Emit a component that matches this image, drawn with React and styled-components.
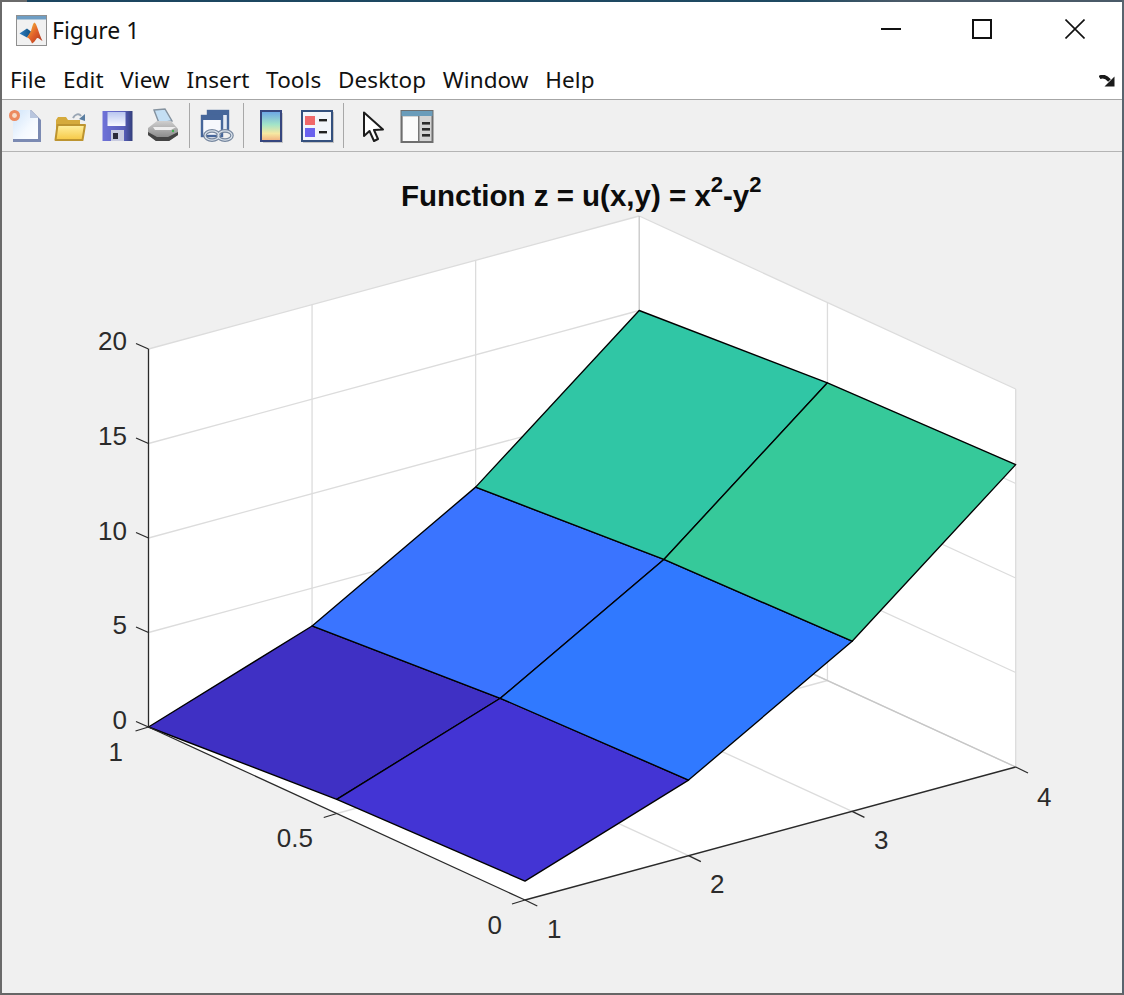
import React from "react";
import styled, { createGlobalStyle } from "styled-components";

const GlobalStyle = createGlobalStyle`
  html, body {
    margin: 0;
    padding: 0;
    background: #f0f0f0;
  }
`;

const Window = styled.div`
  width: 1124px;
  height: 995px;
  box-sizing: border-box;
  display: flex;
  flex-flow: column;
  border-left: 2px solid #6a6a6a;
  border-right: 2px solid #59646e;
  border-bottom: 2px solid #666;
  background: #f0f0f0;
  font-family: "Noto Sans", "Open Sans", sans-serif;
  overflow: hidden;
`;

const TopEdge = styled.div`
  height: 2px;
  flex-shrink: 0;
  margin: 0 -2px;
  background: linear-gradient(90deg, #6a6a6a 27px, #1b4560 27px, #1f4a62 800px, #4a5a68 900px);
`;

const TitleBar = styled.div`
  height: 60px;
  flex-shrink: 0;
  display: flex;
  align-items: center;
  padding-left: 14px;
  background: #fff;
`;

const AppIcon = styled.svg`
  width: 32px;
  height: 32px;
  margin-top: -2px;
  flex-shrink: 0;
`;

const TitleText = styled.span`
  margin-left: 4px;
  margin-top: -4px;
  font-size: 23px;
  color: #111;
`;

const Controls = styled.div`
  margin-left: auto;
  display: flex;
  align-self: stretch;
`;

const ControlButton = styled.div`
  width: ${({ $w }) => $w}px;
  display: flex;
  align-items: center;
  justify-content: center;
  margin-top: -6px;
`;

const MenuBar = styled.div`
  height: 37px;
  flex-shrink: 0;
  display: flex;
  align-items: center;
  gap: 16.6px;
  padding: 0 7px 0 8px;
  background: #fff;
  border-bottom: 1px solid #a6a6a6;
`;

const MenuItem = styled.span`
  margin-top: -2px;
  font-size: 22.5px;
  letter-spacing: 0.1px;
  color: #111;
`;

const DockArrow = styled.svg`
  width: 16px;
  height: 12px;
  margin-left: auto;
`;

const Toolbar = styled.div`
  height: 51px;
  flex-shrink: 0;
  display: flex;
  align-items: center;
  background: #f0f0f0;
  border-bottom: 1px solid #b4b4b4;
`;

const ToolButton = styled.div`
  width: ${({ $w }) => $w || 46}px;
  height: 36px;
  display: flex;
  align-items: center;
  justify-content: center;
  flex-shrink: 0;
  svg {
    width: 36px;
    height: 36px;
    display: block;
    filter: blur(0.5px);
  }
`;

const ToolSeparator = styled.div`
  width: 1px;
  height: 45px;
  margin: 0 ${({ $r }) => $r || 4}px 0 ${({ $l }) => $l || 3}px;
  background: #a8a8a8;
  flex-shrink: 0;
`;

const Canvas = styled.div`
  flex: 1;
  min-height: 0;
`;

const PlotSvg = styled.svg`
  display: block;
  width: 100%;
  height: 100%;
`;

const Wall = styled.polygon`
  fill: #fff;
`;

const GridLine = styled.line`
  stroke: ${({ $strong }) => ($strong ? "#c6c6c6" : "#dcdcdc")};
  stroke-width: 1.3;
`;

const AxisLine = styled.line`
  stroke: #2a2a2a;
  stroke-width: 1.3;
`;

const Patch = styled.polygon`
  stroke: #000;
  stroke-width: 1.35;
  stroke-linejoin: round;
`;

const TickLabel = styled.text`
  font-family: "Liberation Sans", Arial, sans-serif;
  font-size: 26px;
  fill: #2b2b2b;
`;

const PlotTitle = styled.text`
  font-family: "Liberation Sans", Arial, sans-serif;
  font-size: 29.5px;
  font-weight: 700;
  fill: #0c0c0c;
`;

const menus = ["File", "Edit", "View", "Insert", "Tools", "Desktop", "Window", "Help"];

// axes corners in page pixels, plot is an orthographic projection
const A = { x: 148.5, y: 727 };
const F = { x: 525, y: 900 };
const C = { x: 1015.7, y: 767 };
const Z_UNIT = 18.9;

const project = (x, y, z = 0) => ({
  x: A.x + (1 - y) * (F.x - A.x) + ((x - 1) / 3) * (C.x - F.x),
  y: A.y + (1 - y) * (F.y - A.y) + ((x - 1) / 3) * (C.y - F.y) - z * Z_UNIT,
});

const pts = (list) => list.map((p) => `${p.x},${p.y}`).join(" ");

const Segment = ({ as: Comp, from, to, ...rest }) => (
  <Comp x1={from.x} y1={from.y} x2={to.x} y2={to.y} {...rest} />
);

const patchColors = [
  ["#3f30c4", "#4334d4"],
  ["#3a74ff", "#3079ff"],
  ["#30c6a5", "#36c99a"],
];

const zTicks = [0, 5, 10, 15, 20];

const tickLabels = [
  { text: "20", x: 127, y: 350, anchor: "end" },
  { text: "15", x: 127, y: 445, anchor: "end" },
  { text: "10", x: 127, y: 540, anchor: "end" },
  { text: "5", x: 127, y: 634, anchor: "end" },
  { text: "0", x: 127, y: 729, anchor: "end" },
  { text: "1", x: 123, y: 761, anchor: "end" },
  { text: "0.5", x: 313, y: 847, anchor: "end" },
  { text: "0", x: 502, y: 934, anchor: "end" },
  { text: "1", x: 547, y: 938 },
  { text: "2", x: 710, y: 893 },
  { text: "3", x: 874, y: 849 },
  { text: "4", x: 1037, y: 806 },
];

const Surface = () => {
  const patches = [];
  for (let i = 0; i < 3; i++) {
    for (let j = 0; j < 2; j++) {
      const x0 = i + 1;
      const x1 = i + 2;
      const y0 = 1 - j * 0.5;
      const y1 = y0 - 0.5;
      const corner = (x, y) => project(x, y, x * x - y * y);
      patches.push(
        <Patch
          key={`${i}-${j}`}
          fill={patchColors[i][j]}
          points={pts([corner(x0, y0), corner(x1, y0), corner(x1, y1), corner(x0, y1)])}
        />
      );
    }
  }
  return <g>{patches}</g>;
};

const Plot = () => (
  <PlotSvg viewBox="2 152 1120 841">
    <PlotTitle x="401" y="206">
      Function z = u(x,y) = x
      <tspan fontSize="22" dy="-14">2</tspan>
      <tspan dy="14">-y</tspan>
      <tspan fontSize="22" dy="-14">2</tspan>
    </PlotTitle>

    <Wall points={pts([project(1, 1), project(4, 1), project(4, 1, 20), project(1, 1, 20)])} />
    <Wall points={pts([project(4, 1), project(4, 0), project(4, 0, 20), project(4, 1, 20)])} />
    <Wall points={pts([project(1, 1), project(1, 0), project(4, 0), project(4, 1)])} />

    {zTicks.map((z) => (
      <g key={z}>
        <Segment as={GridLine} from={project(1, 1, z)} to={project(4, 1, z)} />
        <Segment as={GridLine} from={project(4, 1, z)} to={project(4, 0, z)} />
      </g>
    ))}
    {[2, 3].map((x) => (
      <g key={x}>
        <Segment as={GridLine} from={project(x, 1)} to={project(x, 1, 20)} />
        <Segment as={GridLine} from={project(x, 0)} to={project(x, 1)} />
      </g>
    ))}
    <Segment as={GridLine} from={project(4, 0.5)} to={project(4, 0.5, 20)} />
    <Segment as={GridLine} from={project(1, 0.5)} to={project(4, 0.5)} />
    <Segment as={GridLine} from={project(4, 0, 0)} to={project(4, 0, 20)} />
    <Segment as={GridLine} $strong from={project(4, 1)} to={project(4, 1, 20)} />
    <Segment as={GridLine} $strong from={project(4, 1)} to={project(4, 0)} />
    <Segment as={GridLine} from={project(1, 1)} to={project(4, 1)} />

    <Surface />

    <Segment as={AxisLine} from={project(1, 1)} to={project(1, 1, 20)} />
    <Segment as={AxisLine} from={project(1, 1)} to={project(1, 0)} />
    <Segment as={AxisLine} from={project(1, 0)} to={project(4, 0)} />
    {zTicks.map((z) => {
      const p = project(1, 1, z);
      return <AxisLine key={z} x1={p.x} y1={p.y} x2={p.x - 12.5} y2={p.y - 5.5} />;
    })}
    {[1, 0.5, 0].map((y) => {
      const p = project(1, y);
      return <AxisLine key={y} x1={p.x} y1={p.y} x2={p.x - 13} y2={p.y + 4} />;
    })}
    {[1, 2, 3, 4].map((x) => {
      const p = project(x, 0);
      return <AxisLine key={x} x1={p.x} y1={p.y} x2={p.x + 12.3} y2={p.y + 6} />;
    })}

    {tickLabels.map((t, i) => (
      <TickLabel key={i} x={t.x} y={t.y} textAnchor={t.anchor || "start"}>
        {t.text}
      </TickLabel>
    ))}
  </PlotSvg>
);

const MatlabIcon = () => (
  <AppIcon viewBox="0 0 32 32">
    <defs>
      <linearGradient id="peak" x1="0" y1="0" x2="1" y2="1">
        <stop offset="0" stopColor="#f7c53b" />
        <stop offset="0.5" stopColor="#e2622a" />
        <stop offset="1" stopColor="#a8301d" />
      </linearGradient>
      <linearGradient id="wing" x1="0" y1="0" x2="1" y2="0">
        <stop offset="0" stopColor="#2f7fc4" />
        <stop offset="1" stopColor="#12507e" />
      </linearGradient>
    </defs>
    <rect x="0.5" y="0.5" width="30" height="30" fill="#f1f1f1" stroke="#8f8f8f" />
    <rect x="1" y="1" width="29" height="3.5" fill="#6f9ec4" />
    <path d="M3.5 18.5 L11 13.5 L15.5 17 L11 22.5 Z" fill="url(#wing)" />
    <path d="M11 22.5 L15 16 C16 13 17 8 18.5 7.5 C20.5 8 23 19 26.5 26 C24 24.5 22.5 22.5 21 23 C19 26 17.5 28 16 28.5 C15 26 13.5 23 11 22.5 Z" fill="url(#peak)" />
  </AppIcon>
);

const NewFileIcon = () => (
  <svg viewBox="0 0 36 36">
    <defs>
      <linearGradient id="page" x1="0" y1="0" x2="1" y2="1">
        <stop offset="0" stopColor="#cfe4fa" />
        <stop offset="0.6" stopColor="#f4f9ff" />
        <stop offset="1" stopColor="#fff" />
      </linearGradient>
    </defs>
    <path d="M6 2 H24 L34 12 V34 H6 Z" fill="#7b8ab2" />
    <path d="M6 2 H23 L31 10 V31 H6 Z" fill="url(#page)" />
    <path d="M23 2 L31 10 H23 Z" fill="#b9c6de" />
    <circle cx="7.5" cy="7.5" r="5.5" fill="#ec8a60" />
    <circle cx="7.5" cy="7.5" r="2.4" fill="#f8dcc8" />
  </svg>
);

const OpenIcon = () => (
  <svg viewBox="0 0 36 36">
    <defs>
      <linearGradient id="folder" x1="0" y1="0" x2="0" y2="1">
        <stop offset="0" stopColor="#fff0a0" />
        <stop offset="1" stopColor="#f6c844" />
      </linearGradient>
    </defs>
    <path d="M3 12 L5 9 H13 L15 12 H27 V32 H3 Z" fill="#d5aa3c" />
    <path d="M2.5 32 L4.5 17 H32 L29.5 32 Z" fill="url(#folder)" stroke="#bd9430" strokeWidth="2" strokeLinejoin="round" />
    <path d="M20 10 C22 6 26 5 28 8" fill="none" stroke="#9aa6b4" strokeWidth="2" />
    <path d="M26 11 L32 6 L32 13 Z" fill="#5a7da0" />
  </svg>
);

const SaveIcon = () => (
  <svg viewBox="0 0 36 36">
    <defs>
      <linearGradient id="disk" x1="0" y1="0" x2="1" y2="0">
        <stop offset="0" stopColor="#6f72d8" />
        <stop offset="0.7" stopColor="#5a60bc" />
        <stop offset="1" stopColor="#333f7c" />
      </linearGradient>
      <linearGradient id="label" x1="0" y1="0" x2="0" y2="1">
        <stop offset="0" stopColor="#b9c6f0" />
        <stop offset="1" stopColor="#f8faff" />
      </linearGradient>
    </defs>
    <rect x="3.5" y="3" width="30" height="30" fill="url(#disk)" />
    <rect x="8.5" y="4" width="18" height="14" fill="url(#label)" />
    <rect x="12" y="22" width="13" height="11" fill="#c9cce0" />
    <rect x="14" y="25" width="5" height="6" fill="#2c2c3a" />
  </svg>
);

const PrintIcon = () => (
  <svg viewBox="0 0 36 36">
    <defs>
      <linearGradient id="printer" x1="0" y1="0" x2="0" y2="1">
        <stop offset="0" stopColor="#cfcfcf" />
        <stop offset="1" stopColor="#7c7c7c" />
      </linearGradient>
    </defs>
    <path d="M9 2 L20 1 L27 13 L14 15 Z" fill="#c4dff4" stroke="#84929f" strokeWidth="1.4" />
    <path d="M3 20 L12 13 H26 L33 21 V27 L24 33 H11 L3 27 Z" fill="url(#printer)" />
    <path d="M3 24 L12 29 H23 L33 24 V27 L24 33 H11 L3 27 Z" fill="#444" />
    <path d="M10 22 H26 L31 19 H8 Z" fill="#eee" />
    <circle cx="28" cy="23" r="1.2" fill="#3fb04f" />
  </svg>
);

const LinkIcon = () => (
  <svg viewBox="0 0 36 36">
    <rect x="9" y="3" width="20" height="20" fill="#e4eaf4" stroke="#46669a" strokeWidth="2.4" />
    <rect x="9" y="3" width="20" height="4" fill="#46669a" />
    <rect x="3" y="8" width="20" height="20" fill="#f6f8fc" stroke="#46669a" strokeWidth="2.4" />
    <rect x="3" y="8" width="20" height="4" fill="#46669a" />
    <ellipse cx="13" cy="27.5" rx="7" ry="4.6" fill="none" stroke="#75869e" strokeWidth="3.6" />
    <ellipse cx="26" cy="27.5" rx="7" ry="4.6" fill="none" stroke="#75869e" strokeWidth="3.6" />
    <ellipse cx="13" cy="27.5" rx="7" ry="4.6" fill="none" stroke="#dbe3ec" strokeWidth="1.3" />
    <ellipse cx="26" cy="27.5" rx="7" ry="4.6" fill="none" stroke="#dbe3ec" strokeWidth="1.3" />
  </svg>
);

const ColorbarIcon = () => (
  <svg viewBox="0 0 36 36">
    <defs>
      <linearGradient id="bar" x1="0" y1="0" x2="0" y2="1">
        <stop offset="0" stopColor="#6aa4e8" />
        <stop offset="0.45" stopColor="#a2e4c8" />
        <stop offset="0.75" stopColor="#f6e8a2" />
        <stop offset="1" stopColor="#f2ae7e" />
      </linearGradient>
    </defs>
    <rect x="10" y="5" width="20" height="30" fill="#c6c6c6" />
    <rect x="8" y="3" width="20" height="30" fill="url(#bar)" stroke="#36467e" strokeWidth="2" />
  </svg>
);

const LegendIcon = () => (
  <svg viewBox="0 0 36 36">
    <rect x="4" y="4" width="31" height="31" fill="#c2c2c2" />
    <rect x="3" y="3" width="30" height="30" fill="#f2f5fa" stroke="#34507e" strokeWidth="2" />
    <rect x="6" y="8" width="10" height="9" fill="#f0686a" />
    <rect x="6" y="20" width="10" height="9" fill="#6a62ee" />
    <rect x="20" y="11" width="8" height="2.4" fill="#222" />
    <rect x="20" y="23" width="8" height="2.4" fill="#222" />
  </svg>
);

const CursorIcon = () => (
  <svg viewBox="0 0 36 36">
    <path d="M11 4.5 L11 28 L16.5 23 L21 33 L25 31 L21 22 L30 21.5 Z" fill="#fff" stroke="#1c1c1c" strokeWidth="2" strokeLinejoin="round" />
  </svg>
);

const PanelIcon = () => (
  <svg viewBox="0 0 36 36">
    <rect x="2.5" y="3" width="31" height="31" fill="#d4d4d4" stroke="#6e6e6e" strokeWidth="2" />
    <rect x="2.5" y="3" width="31" height="5" fill="#6a9cba" />
    <rect x="4" y="9" width="15" height="24" fill="#fbfbfb" />
    <rect x="19" y="8" width="1.5" height="25" fill="#777" />
    <rect x="23" y="14" width="8" height="2.6" fill="#2c2c2c" />
    <rect x="23" y="20" width="8" height="2.6" fill="#2c2c2c" />
    <rect x="23" y="26" width="8" height="2.6" fill="#2c2c2c" />
  </svg>
);

const App = () => (
  <>
    <GlobalStyle />
    <Window>
      <TopEdge />
      <TitleBar>
        <MatlabIcon />
        <TitleText>Figure 1</TitleText>
        <Controls>
          <ControlButton $w={90}>
            <svg width="20" height="2"><rect width="20" height="2" fill="#111" /></svg>
          </ControlButton>
          <ControlButton $w={92}>
            <svg width="20" height="20"><rect x="1" y="1" width="18" height="18" fill="none" stroke="#111" strokeWidth="2" /></svg>
          </ControlButton>
          <ControlButton $w={94}>
            <svg width="20" height="20"><path d="M0.5 0.5 L19.5 19.5 M19.5 0.5 L0.5 19.5" stroke="#111" strokeWidth="1.6" /></svg>
          </ControlButton>
        </Controls>
      </TitleBar>
      <MenuBar>
        {menus.map((m) => (
          <MenuItem key={m}>{m}</MenuItem>
        ))}
        <DockArrow viewBox="0 0 16 12">
          <path d="M0.5 2.5 C4 0.5 7 1.5 10.5 5.5" fill="none" stroke="#1a1a1a" strokeWidth="3.6" />
          <path d="M15.5 1.5 V11.5 H5.5 Z" fill="#1a1a1a" />
        </DockArrow>
      </MenuBar>
      <Toolbar>
        <ToolButton><NewFileIcon /></ToolButton>
        <ToolButton><OpenIcon /></ToolButton>
        <ToolButton><SaveIcon /></ToolButton>
        <ToolButton><PrintIcon /></ToolButton>
        <ToolSeparator />
        <ToolButton><LinkIcon /></ToolButton>
        <ToolSeparator />
        <ToolButton><ColorbarIcon /></ToolButton>
        <ToolButton><LegendIcon /></ToolButton>
        <ToolSeparator />
        <ToolButton><CursorIcon /></ToolButton>
        <ToolButton $w={45}><PanelIcon /></ToolButton>
      </Toolbar>
      <Canvas>
        <Plot />
      </Canvas>
    </Window>
  </>
);

export default App;
